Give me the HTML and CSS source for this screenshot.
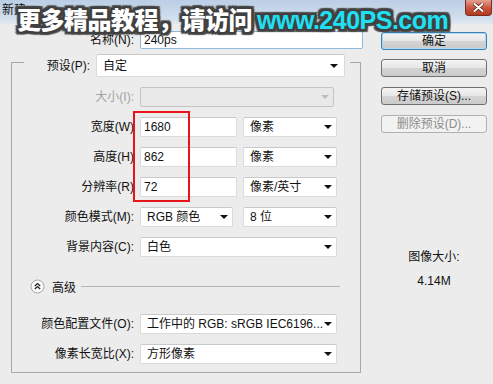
FILE: index.html
```html
<!DOCTYPE html>
<html lang="zh-CN">
<head>
  <meta charset="UTF-8" />
  <title>新建</title>
  <link rel="stylesheet" href="styles.css">
</head>
<body>

<div class="dialog">
  <div class="titlebar">
    <span class="title">新建</span>
    <span class="close">
      <svg width="11" height="9" viewBox="0 0 11 9"><path d="M1.5 1 L9.5 8 M9.5 1 L1.5 8" stroke="#5a1a10" stroke-width="3.4" stroke-linecap="round"/><path d="M1.5 1 L9.5 8 M9.5 1 L1.5 8" stroke="#fff" stroke-width="2" stroke-linecap="round"/></svg>
    </span>
  </div>

  <div class="body">
    <div class="main">
      <div class="name-row">
        <label>名称(N):</label>
        <div class="field focus">240ps</div>
      </div>

      <div class="group">
        <div class="legend">
          <label>预设(P):</label>
          <div class="select tall">自定<span class="arrow"></span></div>
        </div>

        <div class="rows">
          <div class="row">
            <label class="disabled">大小(I):</label>
            <div class="select off w-size"><span class="arrow"></span></div>
          </div>
          <div class="row">
            <label>宽度(W)</label>
            <div class="field w-num">1680</div>
            <div class="select w-unit">像素<span class="arrow"></span></div>
          </div>
          <div class="row">
            <label>高度(H)</label>
            <div class="field w-num">862</div>
            <div class="select w-unit">像素<span class="arrow"></span></div>
          </div>
          <div class="row">
            <label>分辨率(R)</label>
            <div class="field w-num">72</div>
            <div class="select w-unit">像素/英寸<span class="arrow"></span></div>
          </div>
          <div class="row">
            <label>颜色模式(M):</label>
            <div class="select w-mode">RGB 颜色<span class="arrow"></span></div>
            <div class="select w-unit">8 位<span class="arrow"></span></div>
          </div>
          <div class="row">
            <label>背景内容(C):</label>
            <div class="select w-full">白色<span class="arrow"></span></div>
          </div>

          <div class="advanced">
            <svg class="toggle" width="15" height="15" viewBox="0 0 15 15">
              <circle cx="7.5" cy="7.5" r="6.5" fill="#fbfbfb" stroke="#a8a8a8"/>
              <path d="M4.8 7 L7.5 4.6 L10.2 7 M4.8 10 L7.5 7.6 L10.2 10" fill="none" stroke="#222" stroke-width="1.3"/>
            </svg>
            <span>高级</span>
            <span class="rule"></span>
          </div>

          <div class="row">
            <label>颜色配置文件(O):</label>
            <div class="select w-full">工作中的 RGB: sRGB IEC6196...<span class="arrow"></span></div>
          </div>
          <div class="row">
            <label>像素长宽比(X):</label>
            <div class="select w-full">方形像素<span class="arrow"></span></div>
          </div>
        </div>
      </div>
    </div>

    <div class="side">
      <button class="btn default">确定</button>
      <button class="btn">取消</button>
      <button class="btn">存储预设(S)...</button>
      <button class="btn" disabled>删除预设(D)...</button>
      <div class="size-label">图像大小:</div>
      <div class="size-value">4.14M</div>
    </div>
  </div>

  <div class="watermark">更多精品教程，请访问 <span class="url">www.240PS.com</span></div>
  <div class="highlight"></div>
</div>

</body>
</html>
```

FILE: styles.css
```css
body {
  margin: 0;
  background: #ececec;
  font-family: "Liberation Sans", "Noto Sans CJK SC", sans-serif;
  font-size: 12px;
  color: #111;
}
.dialog {
  position: relative;
  width: 493px;
  height: 384px;
  overflow: hidden;
}
.titlebar {
  height: 24px;
  display: flex;
  justify-content: space-between;
  align-items: flex-start;
  background: linear-gradient(#bacee6, #d3e0ee 80%, #e2e8ee);
}
.title {
  padding: 3px 0 0 2px;
  line-height: 14px;
}
.close {
  width: 27px;
  height: 16px;
  margin-right: 1px;
  display: flex;
  align-items: center;
  justify-content: center;
  box-sizing: border-box;
  border: 1px solid #7d2e22;
  border-top: none;
  border-radius: 0 0 4px 4px;
  background: linear-gradient(#e3a08f, #c8533b 55%, #b33a22);
}
.body {
  display: flex;
  padding-top: 7px;
}
.main {
  width: 365px;
}
.name-row {
  display: flex;
  align-items: center;
  height: 18px;
}
.name-row label {
  width: 134px;
  text-align: right;
  margin-right: 6px;
}
label {
  white-space: nowrap;
  line-height: 14px;
}
label.disabled {
  color: #a3a3a3;
}
.field, .select {
  box-sizing: border-box;
  height: 20px;
  background: #fff;
  border: 1px solid #dadada;
  border-top-color: #c9c9c9;
  border-radius: 2px;
  display: flex;
  align-items: center;
  line-height: 14px;
  white-space: nowrap;
}
.field {
  padding-left: 3px;
}
.field.focus {
  width: 223px;
  height: 18px;
  border-color: #8fb9df;
}
.select {
  position: relative;
  padding-left: 6px;
}
.select .arrow {
  position: absolute;
  right: 4px;
  top: 50%;
  margin-top: -2px;
  width: 0;
  height: 0;
  border-left: 4px solid transparent;
  border-right: 4px solid transparent;
  border-top: 4px solid #111;
}
.select.tall {
  width: 249px;
  height: 23px;
}
.select.tall .arrow {
  right: 6px;
}
.select.off {
  background: #e9e9e9;
  border-color: #c4c4c4;
}
.select.off .arrow {
  border-top-color: #bdbdbd;
}
.group {
  margin: 13px 0 0 11px;
  width: 350px;
  box-sizing: border-box;
  border: 1px solid #a9a9a9;
  padding-bottom: 8px;
}
.legend {
  display: flex;
  align-items: center;
  margin: -9px 0 0 12px;
  width: 326px;
  background: #ececec;
}
.legend label {
  width: 66px;
  text-align: right;
  margin-right: 6px;
}
.rows {
  display: flex;
  flex-direction: column;
  gap: 10px;
  padding-top: 10px;
}
.row {
  display: flex;
  align-items: center;
  height: 20px;
}
.row label {
  width: 122px;
  text-align: right;
  margin-right: 6px;
}
.w-size { width: 194px; }
.w-num { width: 97px; margin-right: 6px; }
.w-mode { width: 93px; margin-right: 10px; }
.w-unit { width: 94px; }
.w-full { width: 197px; }
.advanced {
  display: flex;
  align-items: center;
  height: 18px;
  margin: 10px 0 9px 18px;
}
.advanced .toggle {
  margin-right: 7px;
}
.advanced .rule {
  flex: 1;
  height: 1px;
  background: #b5b5b5;
  margin: 0 20px 0 5px;
}
.side {
  margin-left: 16px;
  width: 106px;
  display: flex;
  flex-direction: column;
  gap: 10px;
}
.btn {
  box-sizing: border-box;
  height: 18px;
  padding: 0;
  font: inherit;
  color: #111;
  border: 1px solid #707070;
  border-radius: 3px;
  background: linear-gradient(#f4f4f4, #e6e6e6 50%, #d4d4d4 51%, #cbcbcb);
  line-height: 14px;
}
.btn.default {
  margin-top: 1px;
  margin-bottom: -1px;
  border-color: #3c7fb1;
  box-shadow: inset 0 0 0 1px #a9dbf6;
}
.btn:disabled {
  color: #8d8d8d;
  border-color: #adb2b5;
  background: #f2f2f2;
}
.size-label {
  margin-top: 107px;
  text-align: center;
  line-height: 14px;
}
.size-value {
  text-align: center;
  line-height: 14px;
}
.watermark {
  position: absolute;
  left: 17px;
  top: 4px;
  font-family: "Noto Sans CJK SC", "Liberation Sans", sans-serif;
  font-size: 24px;
  font-weight: 900;
  line-height: 30px;
  color: #fff;
  white-space: nowrap;
  letter-spacing: -0.5px;
  text-shadow:
    2px 0 0 #404040, -2px 0 0 #404040, 0 2px 0 #404040, 0 -2px 0 #404040,
    2px 2px 0 #404040, -2px -2px 0 #404040, 2px -2px 0 #404040, -2px 2px 0 #404040,
    3px 0 1px #4a4a4a, -3px 0 1px #4a4a4a, 0 3px 1px #4a4a4a, 0 -3px 1px #4a4a4a,
    3px 3px 1px #555, -3px -3px 1px #555, 3px -3px 1px #555, -3px 3px 1px #555;
}
.watermark .url {
  font-family: "Liberation Sans", sans-serif;
  font-size: 25px;
  font-weight: bold;
  color: #1fe0f2;
}
.highlight {
  position: absolute;
  left: 133px;
  top: 111px;
  width: 53px;
  height: 87px;
  border: 2px solid #e8141c;
}
```
